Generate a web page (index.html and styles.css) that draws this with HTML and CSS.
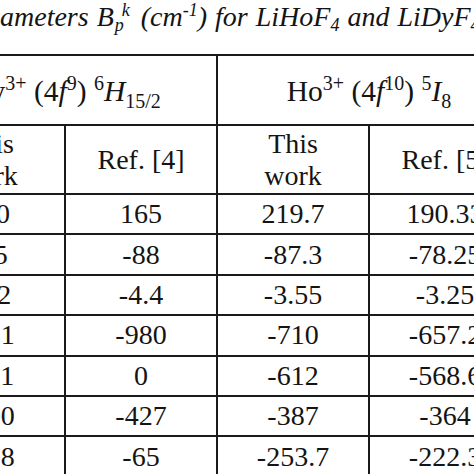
FILE: index.html
```html
<!DOCTYPE html>
<html>
<head>
<meta charset="utf-8">
<link rel="stylesheet" href="styles.css">
</head>
<body>
<div class="page">
  <p class="title">ameters B<span class="stack"><span class="k">k</span><span class="p">p</span></span> (cm<sup>-1</sup>) for LiHoF<sub>4</sub> and LiDyF<sub>4</sub></p>
  <table class="grid">
    <colgroup>
      <col class="c"><col class="c"><col class="c"><col class="c">
    </colgroup>
    <tr class="head">
      <td colspan="2">Dy<sup>3+</sup> (4<i>f</i><sup>9</sup>) <sup>6</sup><i>H</i><sub>15/2</sub></td>
      <td colspan="2">Ho<sup>3+</sup> (4<i>f</i><sup>10</sup>) <sup>5</sup><i>I</i><sub>8</sub></td>
    </tr>
    <tr class="sub">
      <td>This<br>work</td>
      <td>Ref. [4]</td>
      <td>This<br>work</td>
      <td>Ref. [5]</td>
    </tr>
    <tr class="row"><td>190</td><td>165</td><td>219.7</td><td>190.33</td></tr>
    <tr class="row"><td>-85</td><td>-88</td><td>-87.3</td><td>-78.25</td></tr>
    <tr class="row"><td>-4.2</td><td>-4.4</td><td>-3.55</td><td>-3.25</td></tr>
    <tr class="row"><td>-981</td><td>-980</td><td>-710</td><td>-657.2</td></tr>
    <tr class="row"><td>-611</td><td>0</td><td>-612</td><td>-568.6</td></tr>
    <tr class="row"><td>-400</td><td>-427</td><td>-387</td><td>-364</td></tr>
    <tr class="row"><td>-238</td><td>-65</td><td>-253.7</td><td>-222.3</td></tr>
  </table>
</div>
</body>
</html>
```
FILE: styles.css
```css
html, body {
  margin: 0;
  padding: 0;
  background: #fff;
}
body {
  width: 474px;
  height: 474px;
  overflow: hidden;
  color: #141414;
  font-family: "Liberation Serif", "Times New Roman", serif;
}
.page {
  width: 474px;
  overflow: hidden;
}
.title {
  margin: 0;
  padding-top: 1px;
  height: 53px;
  font-size: 28px;
  line-height: 32px;
  font-style: italic;
  white-space: nowrap;
  word-spacing: 1px;
}
.title sup, .title sub {
  font-size: 18px;
  line-height: 0;
}
.title sub { vertical-align: -5px; }
.title sup { vertical-align: 10px; }
.stack {
  display: inline-flex;
  flex-direction: column;
  vertical-align: 10px;
  font-size: 18px;
  line-height: 15px;
  margin-left: 1px;
  margin-right: 3px;
}
.stack .k { margin-left: 7px; }
.grid {
  margin-left: -88px;
  border-collapse: collapse;
  table-layout: fixed;
  width: 608px;
  font-size: 28px;
  text-align: center;
}
.grid .c { width: 152px; }
.grid td {
  border: 2px solid #1a1a1a;
  padding: 0;
  vertical-align: middle;
  white-space: nowrap;
}
.grid sup, .grid sub {
  font-size: 19px;
  line-height: 0;
}
.head { height: 70px; }
.head td { padding-top: 2px; font-size: 29.5px; }
.head sup, .head sub { font-size: 20px; }
.sub { height: 69px; }
.sub td { line-height: 32px; }
.row { height: 40.4px; }
.row td { line-height: 32px; }
```
